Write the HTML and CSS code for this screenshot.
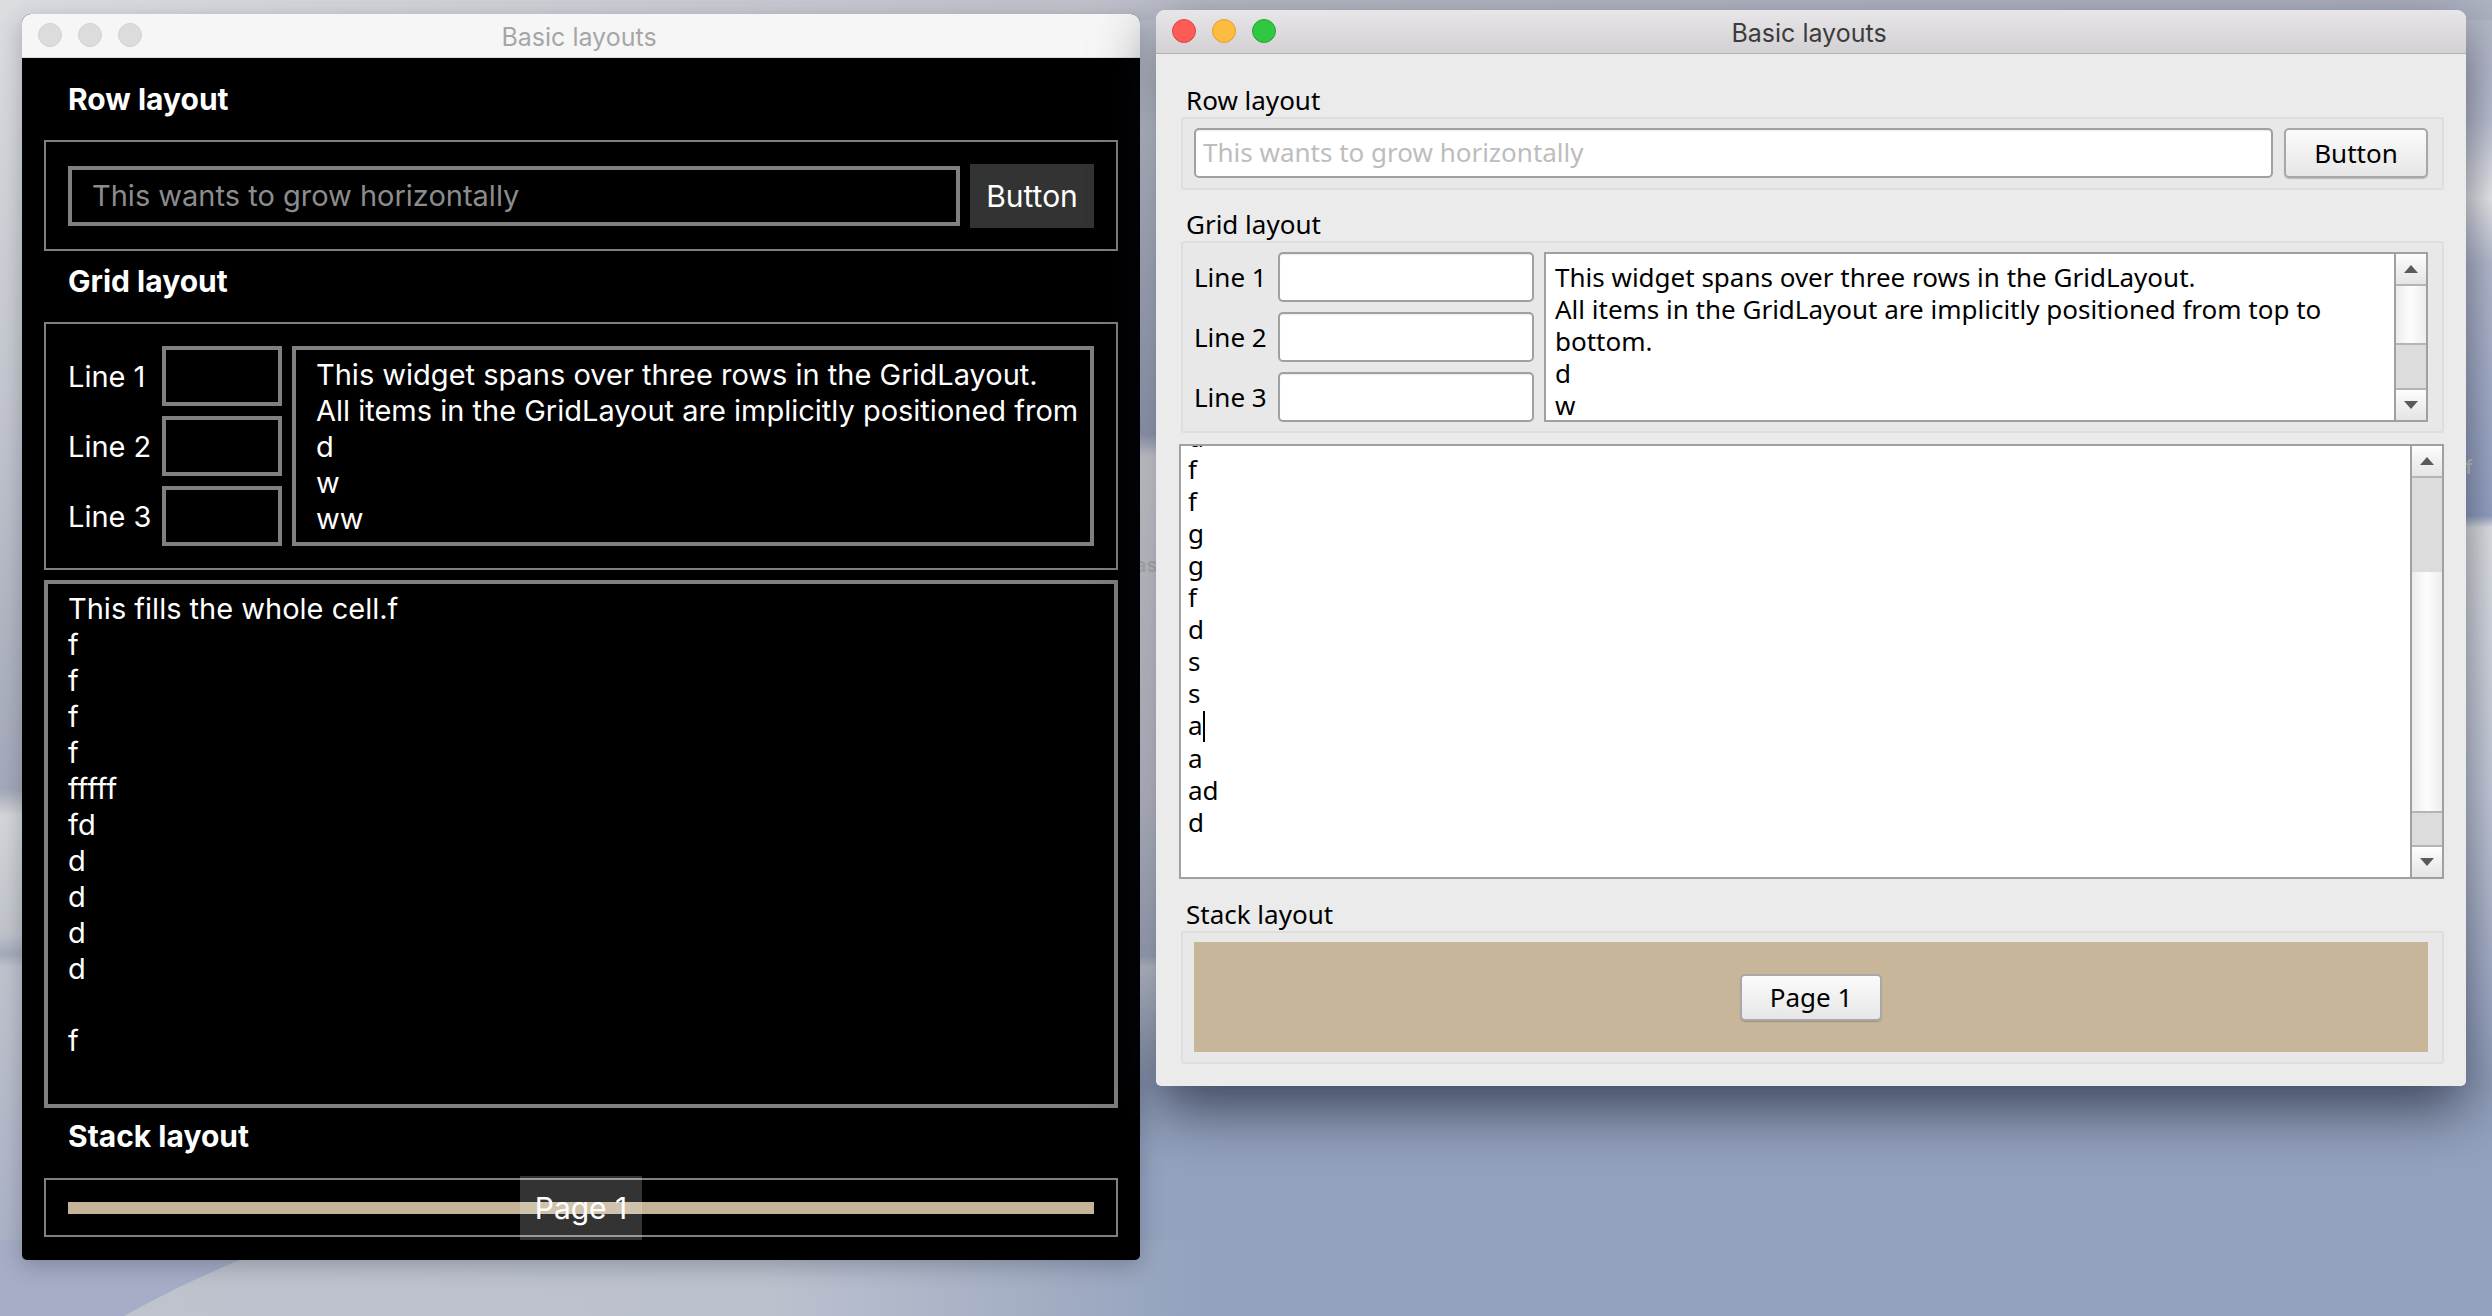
FILE: index.html
```html
<!DOCTYPE html>
<html lang="en">
<head>
  <meta charset="UTF-8">
  <meta name="viewport" content="width=device-width, initial-scale=1.0">
  <title>Basic layouts</title>
  <link rel="stylesheet" href="styles.css">
</head>
<body>

  <!-- desktop wallpaper behind the two windows -->
  <svg class="wallpaper" viewBox="0 0 2492 1316" preserveAspectRatio="none" aria-hidden="true">
    <defs>
      <linearGradient id="leftStrip" gradientUnits="userSpaceOnUse" x1="0" y1="0" x2="0" y2="1316">
        <stop offset="0" stop-color="#dcdde1"/>
        <stop offset="0.3" stop-color="#c4c7cf"/>
        <stop offset="0.6" stop-color="#a4a9ba"/>
        <stop offset="0.62" stop-color="#d4d6d9"/>
        <stop offset="0.71" stop-color="#c0c3cb"/>
        <stop offset="0.725" stop-color="#a5abbd"/>
        <stop offset="0.735" stop-color="#c0c3cd"/>
        <stop offset="1" stop-color="#a6aec6"/>
      </linearGradient>
      <linearGradient id="gapStrip" gradientUnits="userSpaceOnUse" x1="0" y1="0" x2="0" y2="1086">
        <stop offset="0" stop-color="#c0c3cf"/>
        <stop offset="0.12" stop-color="#e0e4ee"/>
        <stop offset="0.4" stop-color="#b5bdd6"/>
        <stop offset="0.42" stop-color="#fafbfc"/>
        <stop offset="0.73" stop-color="#e4e6ef"/>
        <stop offset="0.88" stop-color="#c0c7db"/>
        <stop offset="0.89" stop-color="#e1e6f0"/>
        <stop offset="1" stop-color="#94a2be"/>
      </linearGradient>
      <linearGradient id="rightStrip" gradientUnits="userSpaceOnUse" x1="0" y1="0" x2="0" y2="1086">
        <stop offset="0" stop-color="#b4b8c6"/>
        <stop offset="0.11" stop-color="#c8cddf"/>
        <stop offset="0.182" stop-color="#f8f8fa"/>
        <stop offset="0.243" stop-color="#c2c8dd"/>
        <stop offset="0.475" stop-color="#9fadd0"/>
        <stop offset="0.486" stop-color="#f0f2f4"/>
        <stop offset="0.729" stop-color="#d2d8e8"/>
        <stop offset="0.95" stop-color="#a2aecb"/>
        <stop offset="1" stop-color="#94a2be"/>
      </linearGradient>
      <linearGradient id="topStrip" gradientUnits="userSpaceOnUse" x1="0" y1="0" x2="2492" y2="0">
        <stop offset="0" stop-color="#dcdde1"/>
        <stop offset="0.4" stop-color="#c0c3cc"/>
        <stop offset="1" stop-color="#b0b5c5"/>
      </linearGradient>
      <linearGradient id="duneFill" gradientUnits="userSpaceOnUse" x1="120" y1="0" x2="1200" y2="0">
        <stop offset="0" stop-color="#bfc3ce"/>
        <stop offset="0.6" stop-color="#bcc1ce"/>
        <stop offset="1" stop-color="#94a2be"/>
      </linearGradient>
    </defs>
    <rect width="2492" height="1316" fill="#94a2be"/>
    <path d="M0 1240 L290 1240 C230 1262 170 1290 124 1316 L0 1316 Z" fill="#a6aec7"/>
    <path d="M124 1316 C170 1290 230 1262 290 1240 L1200 1240 L1200 1316 Z" fill="url(#duneFill)"/>
    <rect x="0" y="0" width="30" height="1240" fill="url(#leftStrip)"/>
    <rect x="1136" y="0" width="24" height="1086" fill="url(#gapStrip)"/>
    <rect x="2460" y="0" width="32" height="1086" fill="url(#rightStrip)"/>
    <rect x="0" y="0" width="2492" height="20" fill="url(#topStrip)"/>
  </svg>

  <div class="desktop-label label-as">as</div>
  <div class="desktop-label label-f">f</div>

  <!-- Qt Quick version -->
  <section class="win win-dark">
    <header class="titlebar">
      <div class="lights">
        <span class="light"></span>
        <span class="light"></span>
        <span class="light"></span>
      </div>
      <div class="win-title">Basic layouts</div>
    </header>
    <div class="dark-body">
      <h2 class="d-title d-title-first">Row layout</h2>
      <div class="d-frame d-row">
        <input class="d-field d-grow" placeholder="This wants to grow horizontally">
        <button class="d-btn">Button</button>
      </div>

      <h2 class="d-title">Grid layout</h2>
      <div class="d-frame d-grid">
        <label class="d-label">Line 1</label>
        <input class="d-field">
        <div class="d-text">
          <div>This widget spans over three rows in the GridLayout.</div>
          <div>All items in the GridLayout are implicitly positioned from</div>
          <div>d</div>
          <div>w</div>
          <div>ww</div>
        </div>
        <label class="d-label">Line 2</label>
        <input class="d-field">
        <label class="d-label">Line 3</label>
        <input class="d-field">
      </div>

      <div class="d-area">
        <div>This fills the whole cell.f</div>
        <div>f</div>
        <div>f</div>
        <div>f</div>
        <div>f</div>
        <div>fffff</div>
        <div>fd</div>
        <div>d</div>
        <div>d</div>
        <div>d</div>
        <div>d</div>
        <div>&nbsp;</div>
        <div>f</div>
      </div>

      <h2 class="d-title d-title-last">Stack layout</h2>
      <div class="d-frame d-stack">
        <div class="d-bar"></div>
        <button class="d-btn d-page">Page 1</button>
      </div>
    </div>
  </section>

  <!-- Qt Widgets version -->
  <section class="win win-light">
    <header class="titlebar">
      <div class="lights">
        <span class="light red"></span>
        <span class="light yellow"></span>
        <span class="light green"></span>
      </div>
      <div class="win-title">Basic layouts</div>
    </header>
    <div class="light-body">
      <h2 class="l-title l-title-first">Row layout</h2>
      <div class="l-frame l-row">
        <input class="l-field l-grow" placeholder="This wants to grow horizontally">
        <button class="l-btn l-btn-wide">Button</button>
      </div>

      <h2 class="l-title">Grid layout</h2>
      <div class="l-frame l-grid">
        <label class="l-label">Line 1</label>
        <input class="l-field">
        <div class="l-text l-text-small">
          <div class="l-lines">
            <div>This widget spans over three rows in the GridLayout.</div>
            <div>All items in the GridLayout are implicitly positioned from top to</div>
            <div>bottom.</div>
            <div>d</div>
            <div>w</div>
          </div>
          <div class="scrollbar">
            <div class="sb-btn"><span class="arrow-up"></span></div>
            <div class="sb-thumb sb-thumb-small"></div>
            <div class="sb-track"></div>
            <div class="sb-btn"><span class="arrow-down"></span></div>
          </div>
        </div>
        <label class="l-label">Line 2</label>
        <input class="l-field">
        <label class="l-label">Line 3</label>
        <input class="l-field">
      </div>

      <div class="l-text l-area">
        <div class="l-lines l-lines-scrolled">
          <div>d</div>
          <div>f</div>
          <div>f</div>
          <div>g</div>
          <div>g</div>
          <div>f</div>
          <div>d</div>
          <div>s</div>
          <div>s</div>
          <div>a<span class="caret"></span></div>
          <div>a</div>
          <div>ad</div>
          <div>d</div>
        </div>
        <div class="scrollbar">
          <div class="sb-btn"><span class="arrow-up"></span></div>
          <div class="sb-track-top"></div>
          <div class="sb-thumb"></div>
          <div class="sb-track"></div>
          <div class="sb-btn"><span class="arrow-down"></span></div>
        </div>
      </div>

      <h2 class="l-title l-title-last">Stack layout</h2>
      <div class="l-frame l-stack">
        <div class="l-page">
          <button class="l-btn l-btn-page">Page 1</button>
        </div>
      </div>
    </div>
  </section>

</body>
</html>
```

FILE: styles.css
```css
html, body {
  margin: 0;
  padding: 0;
  height: 100%;
}

body {
  position: relative;
  width: 2492px;
  height: 1316px;
  overflow: hidden;
  background-color: #94a2be;
  font-family: "Liberation Sans", Arial, sans-serif;
}

h2 {
  margin: 0;
  font-size: inherit;
}

input, button {
  font-family: inherit;
  font-size: inherit;
  box-sizing: border-box;
  margin: 0;
  outline: none;
}

.wallpaper {
  position: absolute;
  left: 0;
  top: 0;
  width: 2492px;
  height: 1316px;
}

.desktop-label {
  position: absolute;
  font-family: "Inter", sans-serif;
  font-size: 20px;
  line-height: 24px;
  font-weight: 600;
  color: #d8d8d8;
}

.label-as {
  left: 1135px;
  top: 553px;
}

.label-f {
  left: 2465px;
  top: 455px;
}

/* windows */
.win {
  position: absolute;
  display: flex;
  flex-direction: column;
  box-sizing: border-box;
  border-radius: 9px 9px 5px 5px;
  overflow: hidden;
}

.win-dark {
  left: 22px;
  top: 14px;
  width: 1118px;
  height: 1246px;
  background-color: #000;
  font-family: "Inter", sans-serif;
  font-size: 29px;
  color: #fff;
  box-shadow: 0 6px 22px rgba(40, 45, 60, 0.3);
}

.win-light {
  left: 1156px;
  top: 10px;
  width: 1310px;
  height: 1076px;
  background-color: #ebebeb;
  font-family: "Noto Sans", sans-serif;
  font-size: 26px;
  color: #000;
  box-shadow: 0 22px 60px rgba(10, 15, 30, 0.65);
}

.titlebar {
  position: relative;
  flex: none;
  display: flex;
  align-items: center;
  justify-content: center;
  box-sizing: border-box;
}

.win-dark .titlebar {
  height: 44px;
  background-color: #f6f6f6;
  border-bottom: 1px solid #dcdcdc;
  color: #a6a6a6;
}

.win-light .titlebar {
  height: 44px;
  background: linear-gradient(#e8e6e8, #d2d0d2);
  border-bottom: 1px solid #b4b2b4;
  color: #3c3c3c;
}

.win-title {
  font-family: "Inter", sans-serif;
  font-size: 25px;
  margin: 2px 4px 0 0;
}

.lights {
  position: absolute;
  left: 16px;
  top: 9px;
  display: flex;
  gap: 16px;
}

.light {
  width: 24px;
  height: 24px;
  box-sizing: border-box;
  border-radius: 50%;
  background-color: #dcdcdc;
  border: 1px solid #d2d2d2;
}

.light.red {
  background-color: #fc5b57;
  border-color: #e14640;
}

.light.yellow {
  background-color: #fdbc40;
  border-color: #e0a030;
}

.light.green {
  background-color: #2fc840;
  border-color: #22a830;
}

/* dark window */
.dark-body {
  flex: 1;
  display: flex;
  flex-direction: column;
  padding: 22px 22px 0;
}

.d-title {
  height: 38px;
  line-height: 38px;
  margin: 11px 0 22px 24px;
  font-weight: 700;
  font-size: 30px;
}

.d-title-first {
  margin-top: 0;
}

.d-title-last {
  margin: 9px 0 23px 24px;
}

.d-frame {
  box-sizing: border-box;
  border: 2px solid #808080;
}

.d-row {
  display: flex;
  align-items: center;
  gap: 10px;
  padding: 22px 22px 21px;
}

.d-field {
  height: 60px;
  border: 4px solid #808080;
  background-color: #000;
  color: #fff;
  border-radius: 0;
  padding: 0 20px 2px;
  min-width: 0;
}

.d-field::placeholder {
  color: #8c8c8c;
  opacity: 1;
}

.d-grow {
  flex: 1;
}

.d-btn {
  width: 124px;
  height: 64px;
  padding: 0;
  border: none;
  background-color: rgba(255, 255, 255, 0.2);
  color: #fff;
  font-size: 30px;
}

.d-grid {
  display: grid;
  grid-template-columns: 84px 120px 1fr;
  grid-template-rows: repeat(3, 60px);
  column-gap: 10px;
  row-gap: 10px;
  align-items: center;
  padding: 22px;
}

.d-grid .d-field {
  width: 120px;
}

.d-label {
  white-space: nowrap;
}

.d-text {
  grid-column: 3;
  grid-row: 1 / span 3;
  align-self: stretch;
  box-sizing: border-box;
  border: 4px solid #808080;
  padding: 7px 0 0 20px;
  line-height: 36px;
  white-space: nowrap;
  overflow: hidden;
}

.d-area {
  box-sizing: border-box;
  height: 528px;
  margin-top: 10px;
  border: 4px solid #808080;
  padding: 7px 20px;
  line-height: 36px;
}

.d-stack {
  position: relative;
  height: 59px;
  display: flex;
  align-items: center;
  padding: 0 22px;
}

.d-bar {
  flex: 1;
  height: 12px;
  background-color: #c5b498;
}

.d-page {
  position: absolute;
  left: 50%;
  top: 50%;
  width: 122px;
  transform: translate(-50%, -50%);
}

/* light window */
.light-body {
  flex: 1;
  display: flex;
  flex-direction: column;
  padding: 0 22px 22px 25px;
}

.l-title {
  height: 32px;
  line-height: 32px;
  margin: 18px 0 1px 5px;
  font-weight: 400;
}

.l-title-first {
  margin-top: 30px;
}

.l-title-last {
  margin-top: 19px;
}

.l-frame {
  box-sizing: border-box;
  border: 2px solid #dedede;
  border-radius: 3px;
  background-color: #e8e8e8;
}

.l-row {
  display: flex;
  gap: 11px;
  padding: 9px 14px 10px 11px;
}

.l-field {
  height: 50px;
  border: 2px solid #a0a0a0;
  border-radius: 5px;
  background-color: #fff;
  padding: 0 7px 2px;
  min-width: 0;
  box-shadow: inset 0 1px 1px rgba(0, 0, 0, 0.08);
}

.l-field::placeholder {
  color: #bdbdbd;
  opacity: 1;
}

.l-grow {
  flex: 1;
}

.l-btn {
  padding: 0;
  border: 2px solid #a8a8a8;
  border-radius: 5px;
  background: linear-gradient(#fbfbfb, #e6e6e6);
  color: #000;
  box-shadow: 0 1px 1px rgba(0, 0, 0, 0.2);
}

.l-btn-wide {
  width: 144px;
  height: 50px;
}

.l-grid {
  display: grid;
  grid-template-columns: 74px 256px 1fr;
  grid-template-rows: repeat(3, 50px);
  gap: 10px;
  align-items: center;
  padding: 9px 14px 9px 11px;
}

.l-grid .l-field {
  width: 256px;
}

.l-label {
  white-space: nowrap;
}

.l-text {
  display: flex;
  box-sizing: border-box;
  border: 2px solid #a0a0a0;
  background-color: #fff;
  overflow: hidden;
}

.l-text-small {
  grid-column: 3;
  grid-row: 1 / span 3;
  align-self: stretch;
}

.l-lines {
  flex: 1;
  min-width: 0;
  padding: 7px 0 0 9px;
  line-height: 32px;
  white-space: nowrap;
  overflow: hidden;
}

.l-area {
  height: 435px;
  margin: 11px 0 0 -2px;
}

.l-lines-scrolled {
  padding: 0 0 0 7px;
  margin-top: -25px;
}

.caret {
  display: inline-block;
  width: 2px;
  height: 31px;
  background-color: #000;
  vertical-align: -7px;
}

.scrollbar {
  flex: none;
  width: 32px;
  display: flex;
  flex-direction: column;
  box-sizing: border-box;
  border-left: 2px solid #a0a0a0;
  background-color: #dcdcdc;
}

.sb-btn {
  flex: none;
  height: 32px;
  display: flex;
  align-items: center;
  justify-content: center;
  box-sizing: border-box;
  background: linear-gradient(#fdfdfd, #e4e4e4);
  border-top: 2px solid #b4b4b4;
  border-bottom: 2px solid #b4b4b4;
}

.sb-btn:first-child {
  border-top: none;
}

.sb-btn:last-child {
  border-bottom: none;
}

.arrow-up, .arrow-down {
  width: 0;
  height: 0;
  border-left: 7px solid transparent;
  border-right: 7px solid transparent;
}

.arrow-up {
  border-bottom: 8px solid #5a5a5a;
}

.arrow-down {
  border-top: 8px solid #5a5a5a;
}

.sb-thumb {
  flex: none;
  height: 241px;
  box-sizing: border-box;
  border-bottom: 2px solid #b4b4b4;
  background: linear-gradient(90deg, #ededed, #fdfdfd 50%, #ededed);
}

.sb-thumb-small {
  height: 59px;
}

.sb-track-top {
  flex: none;
  height: 94px;
}

.sb-track {
  flex: 1;
}

.l-stack {
  padding: 9px 14px 10px 11px;
  height: 133px;
}

.l-page {
  height: 110px;
  display: flex;
  align-items: center;
  justify-content: center;
  background-color: #c7b699;
}

.l-btn-page {
  width: 142px;
  height: 47px;
}
```
